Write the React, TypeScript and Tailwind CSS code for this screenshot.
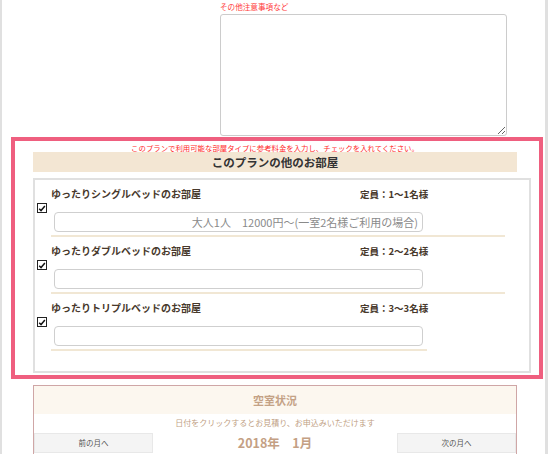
import { useState } from 'react';

type Room = {
  id: string;
  name: string;
  capacity: string;
  placeholder?: string;
  lineClass: string;
};

const ROOMS: Room[] = [
  {
    id: 'single',
    name: 'ゆったりシングルベッドのお部屋',
    capacity: '定員：1〜1名様',
    placeholder: '大人1人　12000円〜(一室2名様ご利用の場合)',
    lineClass: 'w-[454px]',
  },
  { id: 'double', name: 'ゆったりダブルベッドのお部屋', capacity: '定員：2〜2名様', lineClass: 'w-[454px]' },
  { id: 'triple', name: 'ゆったりトリプルベッドのお部屋', capacity: '定員：3〜3名様', lineClass: 'w-[376px]' },
];

function CheckBox({ checked, onToggle }: { checked: boolean; onToggle: () => void }) {
  return (
    <button
      type="button"
      onClick={onToggle}
      className="w-[10px] h-[10px] border border-[#222] bg-white flex items-center justify-center p-0"
      aria-pressed={checked}
    >
      {checked && (
        <svg viewBox="0 0 10 10" className="w-[9px] h-[9px]">
          <path d="M1.5 5.2 L3.8 7.6 L8.6 1.8" fill="none" stroke="#111" strokeWidth="1.8" />
        </svg>
      )}
    </button>
  );
}

function RoomRow({ room, first }: { room: Room; first: boolean }) {
  const [checked, setChecked] = useState(true);
  return (
    <div className={first ? '' : 'mt-[7px]'}>
      <div className="flex items-center h-[14px] text-[10px] leading-[14px] font-bold text-[#47382b]">
        <span className="ml-[14px] w-[309px]">{room.name}</span>
        <span className="text-[9.5px]">{room.capacity}</span>
      </div>
      <div className="mt-[2px] h-[10px]">
        <CheckBox checked={checked} onToggle={() => setChecked((c) => !c)} />
      </div>
      <input
        type="text"
        placeholder={room.placeholder}
        className="block mt-[-1px] ml-[17px] w-[369px] h-[20px] border border-[#cfcfcf] rounded-[4px] bg-white pr-[4px] text-right text-[11px] placeholder:text-[#8a8a8a] outline-none"
      />
      <div className={`mt-[3px] ml-[14px] h-[2px] bg-[#f1e7d4] ${room.lineClass}`} />
    </div>
  );
}

export default function App() {
  return (
    <div className="w-[550px] min-h-[454px] bg-white overflow-hidden font-['Noto_Sans_CJK_JP','Noto_Sans',sans-serif]">
      <div className="w-[548px] min-h-[454px] border-l-2 border-r-[3px] border-[#e0e0e0]">
        {/* notes */}
        <div className="pt-[2px] pl-[218px]">
          <div className="text-[7.6px] leading-[10px] text-[#ff3b3b]">その他注意事項など</div>
          <textarea className="block mt-[2px] w-[287px] h-[122px] border border-[#cccccc] rounded-[3px] bg-white outline-none" />
        </div>

        {/* other rooms */}
        <div className="mt-[1px] ml-[9px] w-[532px] border-4 border-[#ef5f7f] pb-[2px]">
          <div className="ml-[18px] w-[484px] h-[11px] pt-[2px] text-center text-[7.4px] leading-[9px] text-[#ff2a2a] whitespace-nowrap">
            このプランで利用可能な部屋タイプに参考料金を入力し、チェックを入れてください。
          </div>
          <div className="ml-[18px] w-[484px] h-[20px] bg-[#f3e6d3] text-center text-[11.5px] leading-[20px] font-bold text-[#333]">
            このプランの他のお部屋
          </div>
          <div className="mt-[6px] ml-[18px] w-[498px] h-[195px] border-2 border-[#e0e0e0] pt-[7px] pl-[2px]">
            {ROOMS.map((room, i) => (
              <RoomRow key={room.id} room={room} first={i === 0} />
            ))}
          </div>
        </div>

        {/* availability */}
        <div className="mt-[6px] ml-[31px] w-[484px] border border-[#cfa6a6]">
          <div className="h-[28px] bg-[#fcf7ef] text-center text-[11px] leading-[28px] font-bold text-[#c4a286]">空室状況</div>
          <div className="h-[18px] text-center text-[8px] leading-[18px] text-[#bf9f85]">
            日付をクリックするとお見積り、お申込みいただけます
          </div>
          <div className="mt-[1px] flex items-center justify-between">
            <button type="button" className="w-[119px] h-[20px] bg-[#f4f4f4] border border-[#e8e8e8] text-[7.5px] text-[#555]">
              前の月へ
            </button>
            <span className="text-[12.5px] leading-[20px] font-bold text-[#c4a084]">2018年　1月</span>
            <button type="button" className="w-[119px] h-[20px] bg-[#f4f4f4] border border-[#e8e8e8] text-[7.5px] text-[#555]">
              次の月へ
            </button>
          </div>
          <div className="h-[20px]" />
        </div>
      </div>
    </div>
  );
}
